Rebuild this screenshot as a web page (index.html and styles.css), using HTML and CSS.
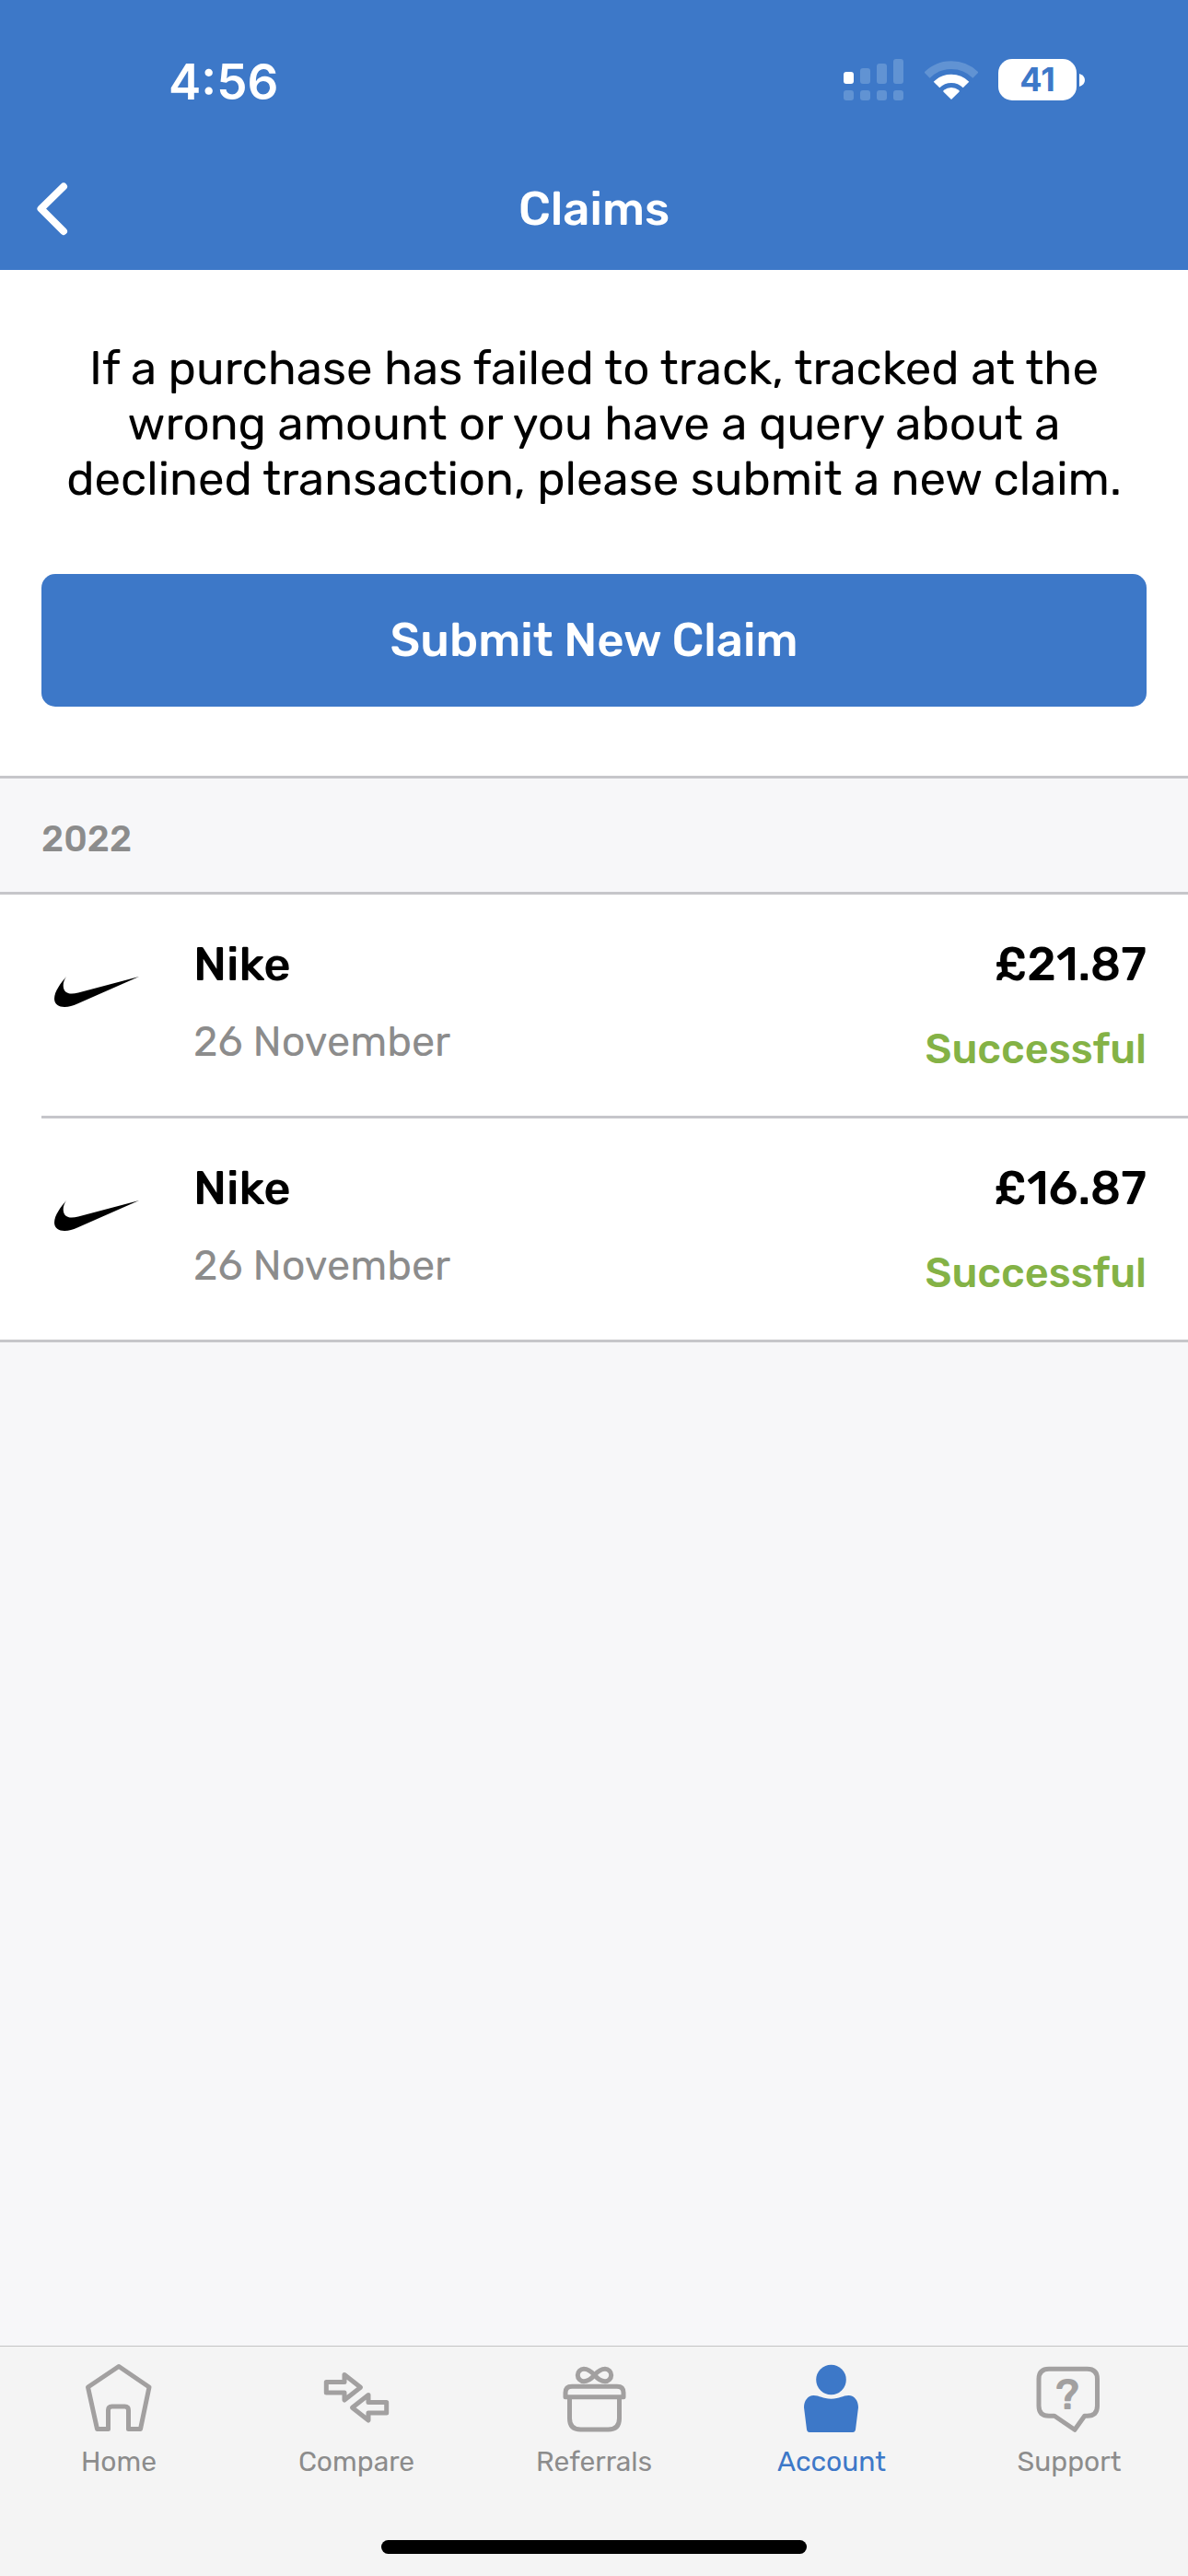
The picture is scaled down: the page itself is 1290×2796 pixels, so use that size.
FILE: index.html
```html
<!DOCTYPE html>
<html lang="en">
<head>
<meta charset="utf-8">
<meta name="viewport" content="width=device-width, initial-scale=1">
<title>Claims</title>
<link rel="stylesheet" href="styles.css">
</head>
<body>
<div class="app">
  <header class="header">
    <div class="status-bar">
      <span class="time">4:56</span>
      <div class="indicators">
        <svg class="signal" viewBox="0 0 66 46" aria-hidden="true">
          <rect x="0" y="14" width="11" height="13" rx="3" class="on"/>
          <rect x="18" y="10" width="11" height="17" rx="3"/>
          <rect x="36" y="5" width="11" height="22" rx="3"/>
          <rect x="54" y="0" width="11" height="27" rx="3"/>
          <rect x="0" y="34" width="11" height="11" rx="3"/>
          <rect x="18" y="34" width="11" height="11" rx="3"/>
          <rect x="36" y="34" width="11" height="11" rx="3"/>
          <rect x="54" y="34" width="11" height="11" rx="3"/>
        </svg>
        <svg class="wifi" viewBox="0 0 58 44" aria-hidden="true">
          <path class="arc faint" stroke-width="8.7" d="M2.6 16.6A37.4 37.4 0 0 1 55.4 16.6"/>
          <path class="arc" stroke-width="9.3" d="M13 27A22.7 22.7 0 0 1 45 27"/>
          <path class="wedge" d="M29 43L20.3 34.4Q20 33.4 21 32.8A13.3 13.3 0 0 1 37 32.8Q38 33.4 37.7 34.4Z"/>
        </svg>
        <div class="battery">
          <span class="battery-level">41</span>
          <svg class="battery-tip" viewBox="0 0 6 14" aria-hidden="true"><path d="M0 0Q6 2 6 7Q6 12 0 14Z"/></svg>
        </div>
      </div>
    </div>
    <div class="title-bar">
      <button class="back" type="button" aria-label="Back">
        <svg viewBox="0 0 34 58" aria-hidden="true"><path d="M29 4.5L4.5 28.5L29 53"/></svg>
      </button>
      <h1 class="title">Claims</h1>
    </div>
  </header>

  <main class="content">
    <section class="intro">
      <p class="intro-text">If a purchase has failed to track, tracked at the wrong amount or you have a query about a declined transaction, please submit a new claim.</p>
      <button class="submit" type="button">Submit New Claim</button>
    </section>
    <section class="group">
      <h2 class="group-title">2022</h2>
      <ul class="claims">
        <li class="claim">
          <svg class="logo" viewBox="0 0 92 33" role="img" aria-label="Nike logo"><path d="M13 0C7 7 0 16 0 24C0 30 5 33 11 33C16 33 20 31.500 25 29.500L92 0L26 17.500C16 20 10 18 9.700 10C9.600 6 11 3 13 0Z"/></svg>
          <div class="details">
            <h3 class="name">Nike</h3>
            <p class="date">26 November</p>
          </div>
          <div class="result">
            <p class="amount">£21.87</p>
            <p class="state">Successful</p>
          </div>
        </li>
        <li class="claim">
          <svg class="logo" viewBox="0 0 92 33" role="img" aria-label="Nike logo"><path d="M13 0C7 7 0 16 0 24C0 30 5 33 11 33C16 33 20 31.500 25 29.500L92 0L26 17.500C16 20 10 18 9.700 10C9.600 6 11 3 13 0Z"/></svg>
          <div class="details">
            <h3 class="name">Nike</h3>
            <p class="date">26 November</p>
          </div>
          <div class="result">
            <p class="amount">£16.87</p>
            <p class="state">Successful</p>
          </div>
        </li>
      </ul>
    </section>
  </main>

  <footer class="footer">
    <nav class="tabs">
      <a class="tab" href="#home">
        <svg class="tab-icon" viewBox="0 0 80 80" aria-hidden="true"><path d="M40 6.500L73 29L63.500 74.500H50.500V54Q50.500 50 46.500 50H32.500Q28.500 50 28.500 54V74.500H16.500L6.500 29Z"/></svg>
        <span>Home</span>
      </a>
      <a class="tab" href="#compare">
        <svg class="tab-icon" viewBox="0 0 80 80" aria-hidden="true"><path d="M7.300 23.500H27V15.500L44.500 29.300L27 43V35H7.300ZM72.700 45.500H53V37.500L35.500 51.300L53 65V57H72.700Z"/></svg>
        <span>Compare</span>
      </a>
      <a class="tab" href="#referrals">
        <svg class="tab-icon" viewBox="0 0 80 80" aria-hidden="true"><path d="M9 39.700V35Q9 28.200 16 28.200H65Q72 28.200 72 35V39.700ZM13.500 40V63Q13.500 75 25.500 75H55.500Q67.500 75 67.500 63V40M40.500 16C37 12 33 9.300 29 9.300A6.700 6.700 0 0 0 29 22.700C33 22.700 37 20 40.500 16C44 12 48 9.300 52 9.300A6.700 6.700 0 0 1 52 22.700C48 22.700 44 20 40.500 16Z"/></svg>
        <span>Referrals</span>
      </a>
      <a class="tab active" href="#account" aria-current="page">
        <svg class="tab-icon solid" viewBox="0 0 80 80" aria-hidden="true"><circle cx="39.500" cy="21" r="16.300"/><path d="M20.500 38C27 38 30 41.700 39.500 41.700C49 41.700 52 38 58.500 38C65 38 69 44 69 51L66 75Q65.500 78 63 78H16Q13.500 78 13 75L10 51C10 44 14 38 20.500 38Z"/></svg>
        <span>Account</span>
      </a>
      <a class="tab" href="#support">
        <svg class="tab-icon" viewBox="0 0 80 80" aria-hidden="true"><path d="M18 9.300H59.500Q70.500 9.300 70.500 20.300V49.300Q70.500 60.300 59.500 60.300H56.700L46 75.300L24 60.300H18Q7 60.300 7 49.300V20.300Q7 9.300 18 9.300Z"/><text class="mark" x="38" y="53" text-anchor="middle">?</text></svg>
        <span>Support</span>
      </a>
    </nav>
    <div class="home-indicator"></div>
  </footer>
</div>
</body>
</html>
```
FILE: styles.css
```css
* {
  box-sizing: border-box;
}

body,
h1,
h2,
h3,
p,
ul {
  margin: 0;
  padding: 0;
}

body {
  font-family: Rubik, Roboto, "Liberation Sans", sans-serif;
  background: #f7f7f9;
  color: #000;
}

button {
  font: inherit;
  border: 0;
  padding: 0;
  color: inherit;
  background: none;
  cursor: pointer;
}

svg {
  display: block;
  flex: none;
}

.app {
  display: flex;
  flex-direction: column;
  min-height: 100vh;
}

.header {
  background: #3d78c8;
  color: #fff;
}

.status-bar {
  display: flex;
  align-items: center;
  justify-content: space-between;
  height: 161px;
  padding: 12px 112px 0 183px;
  font-family: Inter, sans-serif;
}

.time {
  padding-top: 4px;
  font-size: 53px;
  line-height: 60px;
  font-weight: 600;
}

.indicators {
  display: flex;
  align-items: center;
  gap: 22px;
}

.signal {
  width: 66px;
  height: 46px;
  fill: #6193d3;
}

.signal .on {
  fill: #fff;
}

.wifi {
  width: 58px;
  height: 44px;
}

.arc {
  fill: none;
  stroke: #fff;
}

.faint {
  stroke: #6193d3;
}

.wedge,
.battery-tip {
  fill: #fff;
}

.battery {
  display: flex;
  align-items: center;
  gap: 3px;
}

.battery-level {
  width: 85px;
  border-radius: 15px;
  background: #fff;
  color: #3d78c8;
  font-size: 36px;
  line-height: 45px;
  font-weight: 700;
  text-align: center;
}

.battery-tip {
  width: 6px;
  height: 14px;
}

.title-bar {
  display: grid;
  grid-template-columns: 120px 1fr 120px;
  align-items: center;
  height: 132px;
}

.back {
  display: flex;
  padding: 20px 40px;
}

.back svg {
  width: 34px;
  height: 58px;
  fill: none;
  stroke: #fff;
  stroke-width: 8;
  stroke-linecap: round;
  stroke-linejoin: round;
}

.title {
  font-size: 51px;
  line-height: 60px;
  font-weight: 500;
  text-align: center;
}

.content {
  flex: 1;
}

.intro {
  display: flex;
  flex-direction: column;
  gap: 73px;
  padding: 77px 45px 75px;
  background: #fff;
}

.intro-text {
  font-size: 51px;
  line-height: 60px;
  text-align: center;
}

.submit {
  height: 144px;
  border-radius: 15px;
  background: #3d78c8;
  color: #fff;
  font-size: 51px;
  line-height: 60px;
  font-weight: 500;
}

.group {
  border-top: 3px solid #c6c6ca;
  border-bottom: 3px solid #c6c6ca;
}

.group-title {
  padding: 42px 45px 33px;
  color: #8c8c8c;
  font-size: 39px;
  line-height: 48px;
  font-weight: 500;
}

.claims {
  border-top: 3px solid #c6c6ca;
  padding-left: 45px;
  background: #fff;
  list-style: none;
}

.claim {
  display: flex;
  align-items: flex-start;
  padding: 46px 45px 45px 14px;
}

.claim + .claim {
  border-top: 3px solid #c6c6ca;
}

.logo {
  width: 92px;
  height: 33px;
  margin: 43px 59px 0 0;
}

.details {
  display: flex;
  flex: 1;
  flex-direction: column;
  gap: 27px;
}

.result {
  display: flex;
  flex-direction: column;
  gap: 35px;
  text-align: right;
}

.name,
.amount {
  font-size: 51px;
  line-height: 60px;
  font-weight: 500;
}

.date,
.state {
  font-size: 45px;
  line-height: 54px;
}

.date {
  color: #8c8c8c;
}

.state {
  color: #84b246;
  font-weight: 500;
}

.footer {
  border-top: 1px solid #c4c4c4;
  background: #f4f4f4;
  padding: 15px 0 24px;
}

.tabs {
  display: grid;
  grid-template-columns: repeat(5, 1fr);
}

.tab {
  display: flex;
  flex-direction: column;
  align-items: center;
  gap: 12px;
  color: #8c8c8c;
  font-size: 30px;
  line-height: 36px;
  text-decoration: none;
}

.tab.active {
  color: #3d78c8;
}

.tab-icon {
  width: 80px;
  height: 80px;
  fill: none;
  stroke: #a2a0a0;
  stroke-width: 5;
  stroke-linejoin: round;
}

.tab-icon.solid {
  fill: #3d78c8;
  stroke: none;
}

.mark {
  fill: #a2a0a0;
  stroke: none;
  font-size: 47px;
  font-weight: 500;
}

.home-indicator {
  width: 462px;
  height: 15px;
  margin: 67px auto 0;
  border-radius: 8px;
  background: #000;
}
```
